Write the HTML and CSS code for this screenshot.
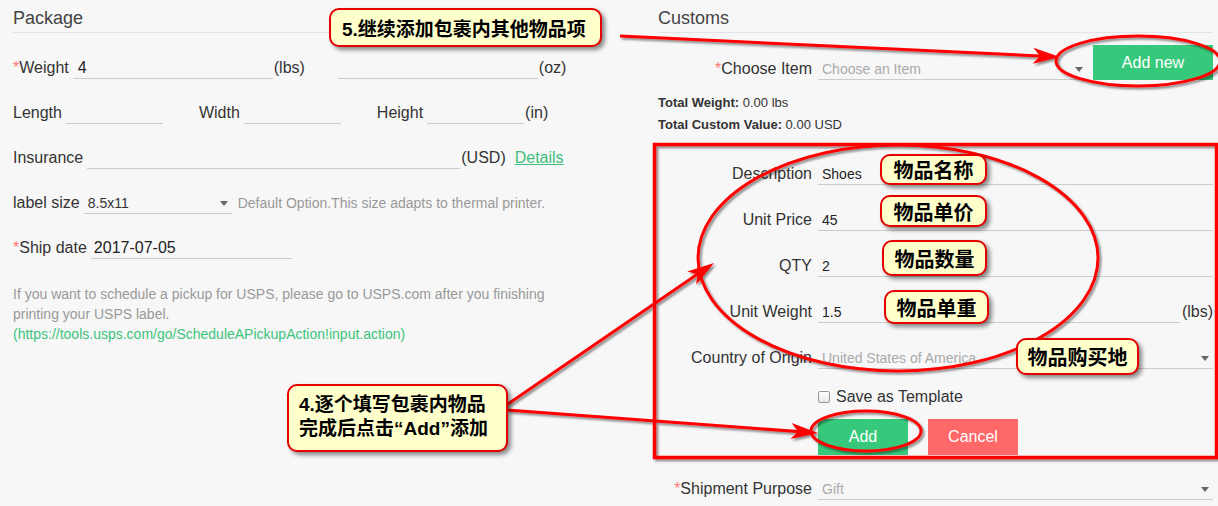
FILE: index.html
```html
<!DOCTYPE html>
<html>
<head>
  <meta charset="utf-8">
  <meta name="viewport" content="width=device-width, initial-scale=1.0">
  <link rel="stylesheet" href="styles.css">
</head>
<body>
  <div class="page">

    <!-- Package -->
    <section class="col col-package">
      <h2 class="section-title">Package</h2>

      <div class="row">
        <label class="lbl"><span class="req">*</span>Weight</label>
        <input class="line-input w-weight" value="4">
        <span class="unit">(lbs)</span>
        <input class="line-input w-weight oz" value="">
        <span class="unit">(oz)</span>
      </div>

      <div class="row">
        <label class="lbl">Length</label>
        <input class="line-input w-dim">
        <label class="lbl next">Width</label>
        <input class="line-input w-dim">
        <label class="lbl next">Height</label>
        <input class="line-input w-dim">
        <span class="unit">(in)</span>
      </div>

      <div class="row">
        <label class="lbl">Insurance</label>
        <input class="line-input w-insurance">
        <span class="unit">(USD)</span>
        <a href="#" class="details">Details</a>
      </div>

      <div class="row">
        <label class="lbl">label size</label>
        <div class="line-select w-label"><span>8.5x11</span><i class="caret"></i></div>
        <span class="help">Default Option.This size adapts to thermal printer.</span>
      </div>

      <div class="row">
        <label class="lbl"><span class="req">*</span>Ship date</label>
        <input class="line-input w-date" value="2017-07-05">
      </div>

      <p class="note">
        If you want to schedule a pickup for USPS, please go to USPS.com after you finishing<br>
        printing your USPS label.<br>
        <a href="#">(https://tools.usps.com/go/ScheduleAPickupAction!input.action)</a>
      </p>
    </section>

    <!-- Customs -->
    <section class="col col-customs">
      <h2 class="section-title">Customs</h2>

      <div class="frow">
        <label class="flbl"><span class="req">*</span>Choose Item</label>
        <div class="line-select grow muted"><span>Choose an Item</span><i class="caret"></i></div>
        <button class="btn btn-green btn-addnew">Add new</button>
      </div>

      <div class="totals">
        <p><b>Total Weight:</b> 0.00 lbs</p>
        <p><b>Total Custom Value:</b> 0.00 USD</p>
      </div>

      <div class="item-form">
        <div class="frow">
          <label class="flbl">Description</label>
          <input class="line-input small grow" value="Shoes">
        </div>
        <div class="frow">
          <label class="flbl">Unit Price</label>
          <input class="line-input small grow" value="45">
        </div>
        <div class="frow">
          <label class="flbl">QTY</label>
          <input class="line-input small grow" value="2">
        </div>
        <div class="frow">
          <label class="flbl">Unit Weight</label>
          <input class="line-input small grow" value="1.5">
          <span class="unit">(lbs)</span>
        </div>
        <div class="frow">
          <label class="flbl">Country of Origin</label>
          <div class="line-select grow muted"><span>United States of America</span><i class="caret"></i></div>
        </div>

        <label class="check-row"><span class="checkbox"></span>Save as Template</label>

        <div class="btn-row">
          <button class="btn btn-green">Add</button>
          <button class="btn btn-red">Cancel</button>
        </div>
      </div>

      <div class="frow ship-row">
        <label class="flbl"><span class="req">*</span>Shipment Purpose</label>
        <div class="line-select grow muted"><span>Gift</span><i class="caret"></i></div>
      </div>
    </section>

    <!-- red marks: box, rings and arrows -->
    <svg class="marks" width="1218" height="506" viewBox="0 0 1218 506">
      <defs>
        <filter id="shade" x="-10%" y="-20%" width="130%" height="150%">
          <feDropShadow dx="2" dy="2" stdDeviation="1.2" flood-color="#000" flood-opacity="0.45"/>
        </filter>
        <marker id="head" markerUnits="userSpaceOnUse" viewBox="-36 -10 40 20"
                markerWidth="40" markerHeight="20" refX="-10" refY="0" orient="auto">
          <path d="M0,0 L-27,-8 L-20,0 L-27,8 Z" fill="#f00" stroke="none"/>
        </marker>
      </defs>
      <g filter="url(#shade)" stroke="#f00" fill="none" stroke-width="3">
        <rect x="654.5" y="144.5" width="562" height="313" stroke-width="3.5"/>
        <ellipse cx="898" cy="258" rx="200" ry="113"/>
        <ellipse cx="1138" cy="61" rx="82" ry="25"/>
        <ellipse cx="866" cy="431" rx="55" ry="20"/>
        <line x1="620" y1="36" x2="1050" y2="56.5" marker-end="url(#head)"/>
        <line x1="505" y1="406" x2="705.7" y2="268.6" marker-end="url(#head)"/>
        <line x1="507" y1="410" x2="808" y2="432.3" marker-end="url(#head)"/>
      </g>
    </svg>

    <div class="callout callout-more">5.继续添加包裹内其他物品项</div>
    <div class="callout callout-fill">4.逐个填写包裹内物品<br>完成后点击“Add”添加</div>
    <div class="callout tag tag-name">物品名称</div>
    <div class="callout tag tag-price">物品单价</div>
    <div class="callout tag tag-qty">物品数量</div>
    <div class="callout tag tag-weight">物品单重</div>
    <div class="callout tag tag-origin">物品购买地</div>
  </div>
</body>
</html>
```

FILE: styles.css
```css
* {
  box-sizing: border-box;
}

body {
  margin: 0;
  background: #f7f7f7;
  font-family: "Liberation Sans", Arial, sans-serif;
  color: #333;
}

.page {
  position: relative;
  width: 1218px;
  height: 506px;
  overflow: hidden;
  display: flex;
  gap: 58px;
  padding: 0 5px 0 13px;
}

.col-package {
  width: 587px;
  flex-shrink: 0;
}

.col-customs {
  width: 555px;
  flex-shrink: 0;
}

.section-title {
  margin: 7px 0 1px;
  padding-bottom: 3px;
  font-size: 18px;
  font-weight: normal;
  line-height: 22px;
  color: #444;
  border-bottom: 1px solid #e4e4e4;
}

.req {
  color: #f77;
}

/* left form rows */
.row {
  display: flex;
  align-items: flex-end;
  height: 45px;
  font-size: 16px;
}

.lbl,
.unit {
  line-height: 20px;
  padding-bottom: 1px;
  white-space: nowrap;
}

.lbl {
  margin-right: 4px;
}

.lbl.next {
  margin-left: 36px;
}

.unit {
  margin-left: 1px;
}

.line-input {
  height: 21px;
  padding: 0 5px;
  border: 0;
  border-bottom: 1px solid #ccc;
  background: transparent;
  font-family: inherit;
  font-size: 16px;
  line-height: 20px;
  color: #222;
  outline: none;
}

.line-input.small {
  padding: 0 4px;
  font-size: 14px;
}

.w-weight { width: 200px; }
.w-weight.oz { margin-left: 33px; }
.w-dim { width: 97px; }
.w-insurance { width: 373px; }
.w-label { width: 148px; }
.w-date { width: 201px; padding-left: 3px; }

.details {
  margin-left: 9px;
  line-height: 20px;
  padding-bottom: 1px;
  color: #3dbf7b;
}

.line-select {
  display: flex;
  align-items: center;
  justify-content: space-between;
  height: 21px;
  padding: 0 4px;
  border-bottom: 1px solid #ccc;
  font-size: 14px;
  color: #333;
}

.line-select.muted {
  color: #aaa;
}

.caret {
  width: 0;
  height: 0;
  border-left: 4px solid transparent;
  border-right: 4px solid transparent;
  border-top: 5px solid #666;
}

.help {
  margin-left: 6px;
  line-height: 20px;
  padding-bottom: 1px;
  font-size: 14px;
  color: #999;
  white-space: nowrap;
}

.note {
  margin: 25px 0 0;
  font-size: 14px;
  line-height: 20px;
  color: #999;
}

.note a {
  color: #3cc47c;
  text-decoration: none;
}

/* right form rows */
.frow {
  display: flex;
  align-items: flex-end;
  height: 46px;
  font-size: 16px;
}

.flbl {
  width: 154px;
  flex-shrink: 0;
  margin-right: 6px;
  text-align: right;
  line-height: 20px;
  padding-bottom: 1px;
  white-space: nowrap;
}

.grow {
  flex: 1;
  min-width: 0;
}

.frow .unit {
  margin-left: 2px;
}

.btn {
  height: 36px;
  width: 90px;
  border: 0;
  padding: 0;
  font-family: inherit;
  font-size: 16px;
  color: #fff;
}

.btn-green {
  background: #37c97b;
}

.btn-red {
  background: #ff6868;
}

.btn-addnew {
  width: 120px;
  height: 35px;
  margin-left: 6px;
}

.totals {
  margin-top: 12px;
  font-size: 13px;
  line-height: 22px;
}

.totals p {
  margin: 0;
}

.item-form {
  margin-top: 3px;
}

.check-row {
  display: flex;
  align-items: center;
  height: 20px;
  margin: 18px 0 0 160px;
  font-size: 16px;
}

.checkbox {
  width: 12px;
  height: 12px;
  margin-right: 6px;
  border: 1px solid #999;
  border-radius: 2px;
  background: linear-gradient(#fff, #e8e8e8);
}

.btn-row {
  display: flex;
  gap: 20px;
  margin: 12px 0 0 160px;
}

.ship-row {
  height: 45px;
}

/* annotations over the form */
.marks {
  position: absolute;
  left: 0;
  top: 0;
  pointer-events: none;
}

.callout {
  position: absolute;
  display: flex;
  align-items: center;
  background: #ffffcc;
  border: 2px solid #e60000;
  border-radius: 10px;
  box-shadow: 3px 3px 4px rgba(0, 0, 0, 0.45);
  font-family: "Liberation Sans", "Noto Sans CJK SC", sans-serif;
  font-weight: bold;
  color: #000;
  white-space: nowrap;
}

.callout-more {
  left: 329px;
  top: 8px;
  width: 273px;
  height: 39px;
  padding-left: 11px;
  font-size: 19px;
}

.callout-fill {
  display: block;
  left: 287px;
  top: 384px;
  width: 221px;
  height: 68px;
  padding: 7px 0 0 10px;
  font-size: 19px;
  line-height: 24px;
}

.tag {
  justify-content: center;
  font-size: 20px;
}

.tag-name   { left: 880px;  top: 154px; width: 107px; height: 31px; }
.tag-price  { left: 880px;  top: 195px; width: 107px; height: 32px; }
.tag-qty    { left: 882px;  top: 240px; width: 105px; height: 36px; }
.tag-weight { left: 884px;  top: 290px; width: 105px; height: 34px; }
.tag-origin { left: 1016px; top: 338px; width: 123px; height: 37px; }
```
